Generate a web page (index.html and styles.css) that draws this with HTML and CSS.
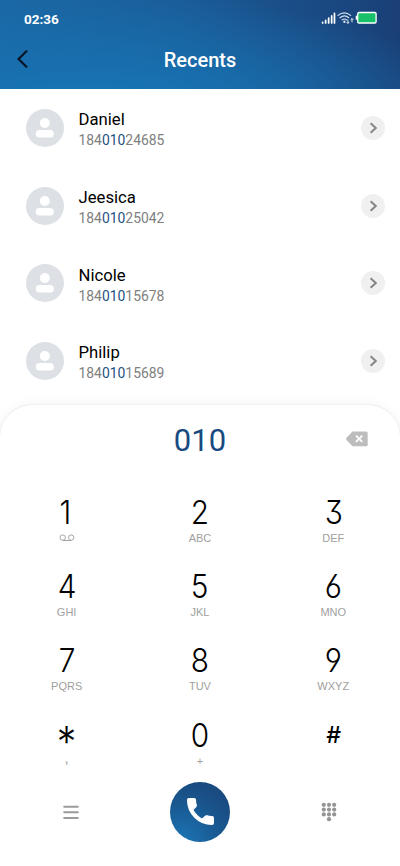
FILE: index.html
```html
<!DOCTYPE html>
<html lang="en">
<head>
<meta charset="utf-8">
<title>Recents</title>
<link rel="stylesheet" href="styles.css">
</head>
<body>
<svg class="defs" aria-hidden="true">
  <symbol id="avatar" viewBox="0 0 38 38"><circle cx="19" cy="19" r="19" fill="#dde0e5"/><circle cx="18.8" cy="14" r="5" fill="#fff"/><rect x="9.8" y="21" width="18" height="7.6" rx="3.6" fill="#fff"/></symbol>
  <symbol id="next" viewBox="0 0 24 24"><circle cx="12" cy="12" r="12" fill="#f0f0f0"/><path d="M9.6 7.2 14.8 12l-5.2 4.8" fill="none" stroke="#858585" stroke-width="2"/></symbol>
</svg>
<header class="header">
  <div class="status">
    <span class="time">02:36</span>
    <svg class="status-icons" viewBox="0 0 56 14" width="56" height="14">
      <g stroke="#fff" stroke-width="1.8" stroke-linecap="round"><path d="M2 11.3v.6M5.1 9.5v2.4M8.2 7.2v4.7M11.3 4.9v7M14.2 2.5v9.4" transform="translate(-.3 0) scale(.97 1)"/></g>
      <g fill="none" stroke="#d5e3f0" stroke-width="1.2" stroke-linecap="round"><path d="M17 4.4Q23.2-.6 29.6 4.4M19 6.7q4.5-3.5 8.7 0M21.1 8.9q2.3-1.8 4.6 0"/><circle cx="23.4" cy="10.8" r=".6"/><path d="M26.9 9v3.3m-1.1-1.1 1.1 1.1 1.1-1.1M31 11V7.6m-1.1 1.1L31 7.6l1.1 1.1" stroke-width="1"/></g>
      <rect x="36.7" y="1.5" width="18.4" height="10.5" rx="1.3" fill="#18c167" stroke="#fff" stroke-width="1.3"/><path d="M35.6 4.7v4" stroke="#fff" stroke-width="1.8"/>
    </svg>
  </div>
  <div class="titlebar">
    <svg class="back" viewBox="0 0 11 18" width="11" height="18"><path d="M9.4 1.2 1.5 9l7.9 7.8" fill="none" stroke="#071321" stroke-width="2.1" stroke-linecap="round" stroke-linejoin="round"/></svg>
    <h1>Recents</h1>
  </div>
</header>
<main class="list">
  <div class="contact"><svg class="avatar"><use href="#avatar"/></svg><div class="info"><div class="name">Daniel</div><div class="phone">184<b>010</b>24685</div></div><svg class="next"><use href="#next"/></svg></div>
  <div class="contact"><svg class="avatar"><use href="#avatar"/></svg><div class="info"><div class="name">Jeesica</div><div class="phone">184<b>010</b>25042</div></div><svg class="next"><use href="#next"/></svg></div>
  <div class="contact"><svg class="avatar"><use href="#avatar"/></svg><div class="info"><div class="name">Nicole</div><div class="phone">184<b>010</b>15678</div></div><svg class="next"><use href="#next"/></svg></div>
  <div class="contact"><svg class="avatar"><use href="#avatar"/></svg><div class="info"><div class="name">Philip</div><div class="phone">184<b>010</b>15689</div></div><svg class="next"><use href="#next"/></svg></div>
</main>
<section class="dialer">
  <div class="entry">
    <span class="typed">010</span>
    <svg class="erase" viewBox="0 0 22 16" width="22" height="16"><path d="M6.5.5h13.7q1.5 0 1.5 1.5v11.7q0 1.5-1.5 1.5H6.5L.5 9q-.8-1.1 0-2.2z" fill="#bdbdbd"/><path d="m10 4.7 6.2 6.2m0-6.2L10 10.9" stroke="#fff" stroke-width="1.8"/></svg>
  </div>
  <div class="keys">
    <div class="key"><span class="digit one">1</span><span class="sub voicemail"><svg viewBox="0 0 16 8" width="16" height="8"><g fill="none" stroke="#a5a5a5" stroke-width="1"><circle cx="3.7" cy="3.6" r="2.7"/><circle cx="12.2" cy="3.6" r="2.7"/><path d="M3.7 6.5h8.5"/></g></svg></span></div>
    <div class="key"><span class="digit">2</span><span class="sub">ABC</span></div>
    <div class="key"><span class="digit">3</span><span class="sub">DEF</span></div>
    <div class="key"><span class="digit">4</span><span class="sub">GHI</span></div>
    <div class="key"><span class="digit">5</span><span class="sub">JKL</span></div>
    <div class="key"><span class="digit">6</span><span class="sub">MNO</span></div>
    <div class="key"><span class="digit">7</span><span class="sub">PQRS</span></div>
    <div class="key"><span class="digit">8</span><span class="sub">TUV</span></div>
    <div class="key"><span class="digit">9</span><span class="sub">WXYZ</span></div>
    <div class="key"><span class="digit star">*</span><span class="sub comma">,</span></div>
    <div class="key"><span class="digit">0</span><span class="sub">+</span></div>
    <div class="key"><span class="digit hash">#</span><span class="sub"></span></div>
  </div>
  <div class="actions">
    <svg class="menu" viewBox="0 0 16 15" width="16" height="15"><path d="M1.2 1.8h13.6M1.2 7.3h13.6M1.2 12.9h13.6" stroke="#9b9b9b" stroke-width="2" stroke-linecap="round"/></svg>
    <div class="call"><svg viewBox="2.6 2.6 18.8 18.8" width="27" height="27"><path fill="#fff" d="M6.62 10.79c1.44 2.83 3.76 5.14 6.59 6.59l2-2c.4-.4.8-.45 1.22-.34 1.12.37 2.33.47 3.57.47.55 0 1 .45 1 1V20c0 .55-.45 1-1 1-9.39 0-17-7.61-17-17 0-.55.45-1 1-1h3.5c.55 0 1 .45 1 1 0 1.25.2 2.45.57 3.57.11.35.03.74-.25 1.02z" stroke="#fff" stroke-width=".8"/></svg></div>
    <svg viewBox="0 0 16 20" width="16" height="20"><g fill="#949494"><circle cx="2.8" cy="2.8" r="2.1"/><circle cx="8" cy="2.8" r="2.1"/><circle cx="13.2" cy="2.8" r="2.1"/><circle cx="2.8" cy="7.6" r="2.1"/><circle cx="8" cy="7.6" r="2.1"/><circle cx="13.2" cy="7.6" r="2.1"/><circle cx="2.8" cy="12.4" r="2.1"/><circle cx="8" cy="12.4" r="2.1"/><circle cx="13.2" cy="12.4" r="2.1"/><circle cx="8" cy="17.2" r="2.1"/></g></svg>
  </div>
</section>
</body>
</html>
```
FILE: styles.css
```css
* { box-sizing: border-box; }
body { margin: 0; width: 400px; height: 866px; overflow: hidden; display: flex; flex-direction: column; background: #fff; font-family: Roboto, sans-serif; color: #000; }
svg { display: block; flex: none; }
.defs { width: 0; height: 0; position: absolute; }
.header { height: 89px; flex: none; background: radial-gradient(ellipse 400px 125px at 80px 115px, #177abb 0%, #1870af 35%, rgba(24, 103, 161, 0) 100%), linear-gradient(90deg, #1b67a4 0%, #1a5c98 45%, #1a4c86 75%, #1a3f76 100%); color: #fff; }
.status { height: 38px; padding: 0 23px 0 24px; display: flex; justify-content: space-between; align-items: center; }
.status-icons { margin-top: -2px; }
.time { font-size: 13.5px; font-weight: 700; }
.titlebar { height: 44px; padding: 0 17px; display: grid; grid-template-columns: 11px 1fr 11px; align-items: center; }
.back { margin-top: -2px; }
h1 { margin: 0; font-size: 20px; line-height: 24px; font-weight: 500; text-align: center; }
.list { height: 316px; flex: none; }
.contact { height: 77.7px; padding: 0 15px 0 26px; display: flex; align-items: center; }
.avatar { width: 38px; height: 38px; }
.info { flex: 1; padding: 4px 0 0 14.5px; }
.name { font-size: 16.7px; line-height: 22px; }
.phone { font-size: 13.9px; line-height: 19px; color: #808080; }
.phone b { font-weight: 400; color: #1d4f80; }
.next { width: 24px; height: 24px; }
.dialer { flex: 1; border-radius: 32px 32px 0 0; background: #fff; box-shadow: 0 0 14px rgba(0, 0, 0, .05), 0 0 2px rgba(0, 0, 0, .12); }
.entry { height: 70px; padding: 0 33px; display: grid; grid-template-columns: 22px 1fr 22px; align-items: center; }
.typed { grid-column: 2; padding-top: 1px; font-size: 31px; line-height: 36px; text-align: center; color: #184a80; }
.erase { margin: -2px 0 0 1px; }
.keys { padding: 18px 0 0; display: grid; grid-template-columns: 133.3px 133.3px 133.3px; grid-auto-rows: 74.2px; }
.key { display: flex; flex-direction: column; align-items: center; }
.digit { height: 39px; font: 350 32px/40px Inter, sans-serif; font-feature-settings: "cv03", "cv04", "cv09"; transform: scaleX(.93); }
.one { margin-right: 3px; }
.star { font-size: 42px; line-height: 52px; }
.hash { font-size: 23px; line-height: 39px; font-weight: 500; font-style: italic; transform: none; }
.sub { height: 12px; font: 11px/12px "Liberation Sans", sans-serif; color: #a0a0a0; }
.voicemail { padding-top: 2px; }
.comma { margin-top: -3px; font-size: 15px; }
.actions { margin-top: -8px; padding: 0 63px; display: flex; justify-content: space-between; align-items: center; }
.menu { margin-top: 1px; }
.call { width: 60px; height: 60px; border-radius: 50%; display: flex; align-items: center; justify-content: center; background: radial-gradient(circle at 20% 100%, #1b75b5 0%, #195890 50%, #1a4176 100%); }
```
